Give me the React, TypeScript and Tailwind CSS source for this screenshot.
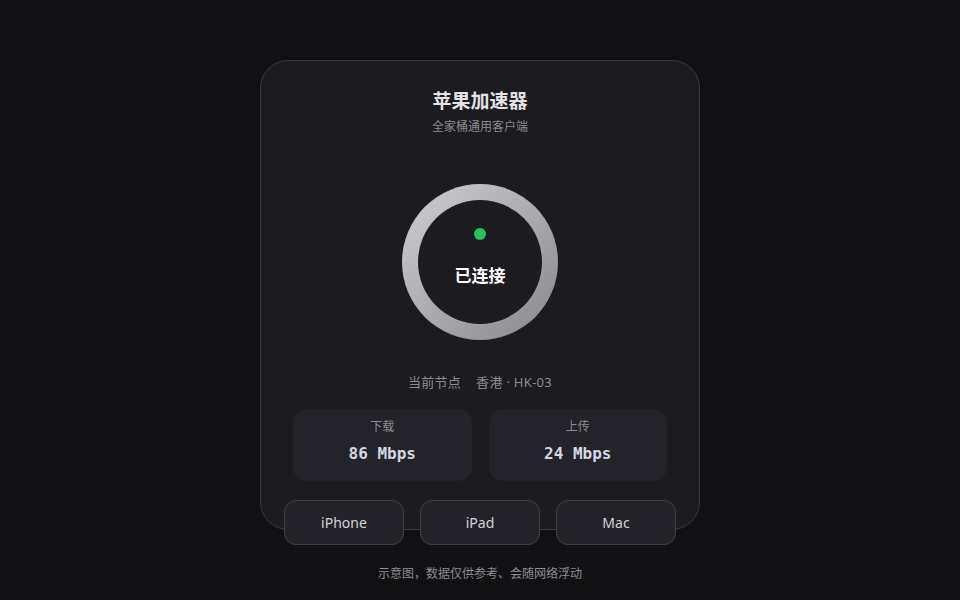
import React from "react";

const stats = [
  { label: "下载", value: "86 Mbps" },
  { label: "上传", value: "24 Mbps" },
];

const devices = ["iPhone", "iPad", "Mac"];

const App = () => {
  return (
    <div
      className="min-h-[600px] w-full bg-[#111113] flex flex-col items-center pt-[60px]"
      style={{ fontFamily: '"Noto Sans", "Noto Sans CJK SC", sans-serif' }}
    >
      <div className="w-[440px] h-[470px] shrink-0 rounded-[28px] border border-[#3a393f] bg-[#1c1b20] flex flex-col items-center pt-[26px] px-8">
        <h1 className="shrink-0 text-[19px] leading-[28px] font-bold text-[#e4e4e7]">
          苹果加速器
        </h1>
        <p className="shrink-0 mt-[4px] text-xs leading-4 text-[#8b8b95]">全家桶通用客户端</p>

        <div className="shrink-0 mt-[49px] w-[156px] h-[156px] rounded-full bg-gradient-to-br from-[#d0d0d4] to-[#88878d] p-4">
          <div className="w-full h-full rounded-full bg-[#1c1b20] flex flex-col items-center pt-[28px]">
            <span className="w-3 h-3 rounded-full bg-[#22c55e]" />
            <span className="mt-[24px] text-[17px] leading-6 font-bold text-white">
              已连接
            </span>
          </div>
        </div>

        <p className="shrink-0 mt-[32px] text-[13px] leading-5 tracking-[0.3px] text-[#8d8d93]">
          当前节点<span className="ml-[15px]">香港 · HK-03</span>
        </p>

        <div className="shrink-0 mt-[17px] w-full grid grid-cols-2 gap-[17px]">
          {stats.map((s) => (
            <div
              key={s.label}
              className="h-[72px] rounded-[14px] bg-[#242329] flex flex-col items-center pt-[10px]"
            >
              <span className="text-xs leading-4 text-[#8d8d93]">{s.label}</span>
              <span
                className="mt-[9px] text-base leading-5 font-bold text-[#d3d8e4]"
                style={{ fontFamily: '"DejaVu Sans Mono", monospace' }}
              >
                {s.value}
              </span>
            </div>
          ))}
        </div>

        <div className="shrink-0 mt-[19px] w-[392px] grid grid-cols-3 gap-4">
          {devices.map((d) => (
            <button
              key={d}
              type="button"
              className="h-[45px] rounded-xl border border-[#403f45] bg-[#232228] text-sm text-[#d4d4d8]"
            >
              {d}
            </button>
          ))}
        </div>
      </div>

      <p className="mt-[36px] text-xs leading-4 text-[#8d8d93]">
        示意图，数据仅供参考、会随网络浮动
      </p>
    </div>
  );
};

export default App;
